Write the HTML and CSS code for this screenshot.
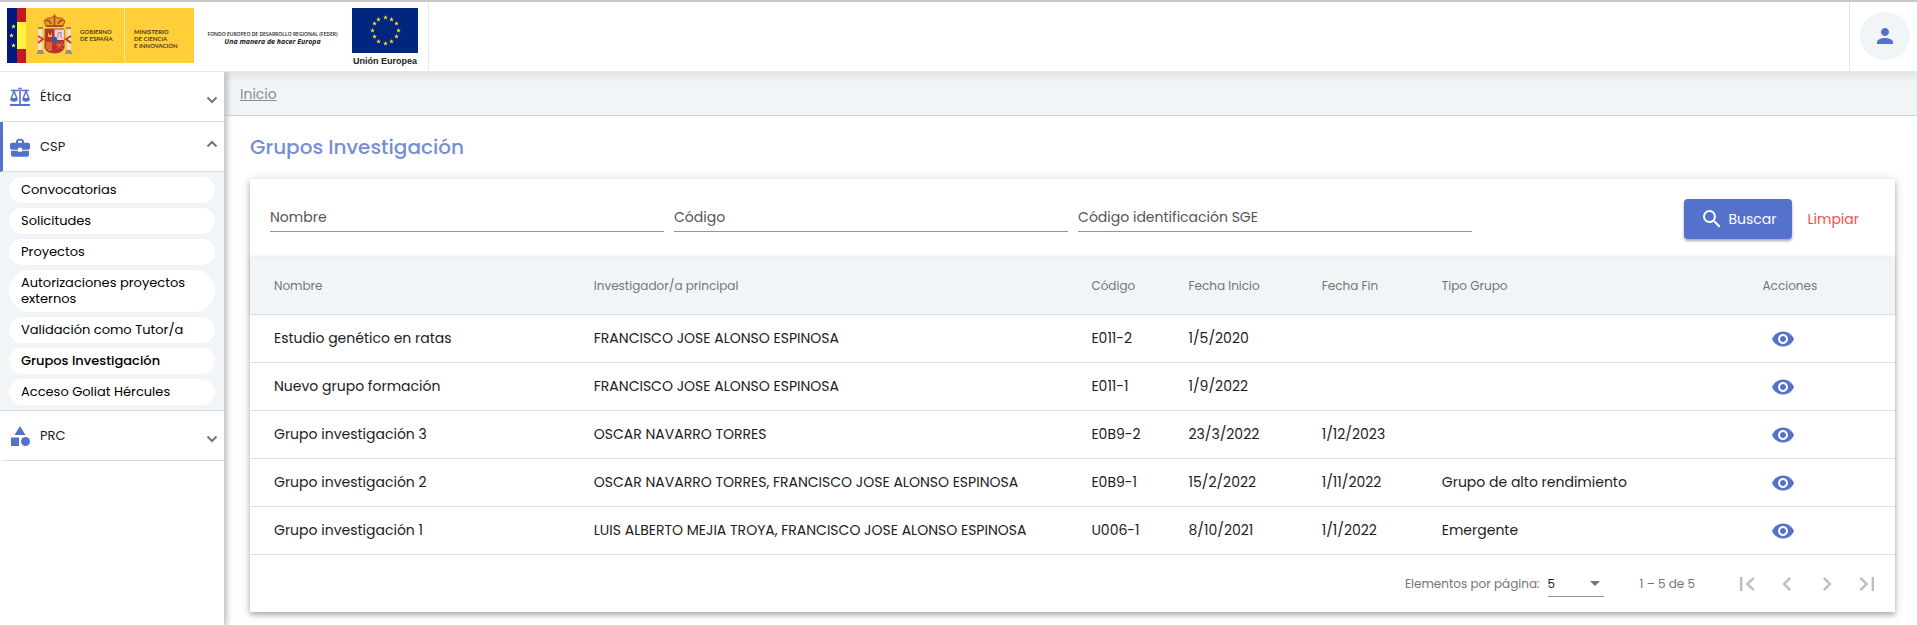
FILE: index.html
```html
<!DOCTYPE html>
<html lang="es">
<head>
<meta charset="utf-8">
<title>Grupos Investigación</title>
<link rel="stylesheet" href="styles.css">
</head>
<body>
<svg class="sprite" aria-hidden="true">
  <symbol id="eye" viewBox="0 0 24 24"><path d="M12 4.5C7 4.5 2.73 7.61 1 12c1.73 4.39 6 7.5 11 7.5s9.27-3.11 11-7.5c-1.73-4.39-6-7.5-11-7.5zM12 17c-2.76 0-5-2.24-5-5s2.24-5 5-5 5 2.24 5 5-2.24 5-5 5zm0-8c-1.66 0-3 1.34-3 3s1.34 3 3 3 3-1.34 3-3-1.34-3-3-3z"/></symbol>
  <symbol id="chevron" viewBox="0 0 12 8"><path d="M1.5 1.5 6 6l4.500-4.500" fill="none" stroke="currentColor" stroke-width="2"/></symbol>
  <symbol id="star" viewBox="-10 -10 20 20"><path d="M0-10 2.500-3.200 9.500-3 4 1.300 6 8 0 4-6 8-4 1.300-9.500-3-2.500-3.200Z"/></symbol>
</svg>
<header class="topbar">
  <div class="logos">
    <svg class="logo-gob" viewBox="0 0 187 55" role="img" aria-label="Gobierno de España, Ministerio de Ciencia e Innovación">
      <rect width="187" height="55" fill="#ffce38"/>
      <rect width="10" height="55" fill="#001a80"/>
      <rect x="10" width="9" height="55" fill="#c41a1f"/>
      <rect x="10" y="14" width="9" height="27" fill="#fff33b"/>
      <g fill="#ffe94a"><use href="#star" x="4" y="16" width="5" height="5"/><use href="#star" x="2" y="25" width="5" height="5"/><use href="#star" x="4" y="35" width="5" height="5"/></g>
      <g>
        <path d="M33 19v25M62 19v25" stroke="#e9e5df" stroke-width="3.500"/>
        <path d="M31 20h5M31 43h5M59 20h5M59 43h5" stroke="#b98542" stroke-width="2"/>
        <path d="M31 28l5 3-5 4M64 28l-5 3 5 4" fill="none" stroke="#cc3b2d" stroke-width="2"/>
        <path d="M30 45h7M58 45h7" stroke="#8996a3" stroke-width="2"/>
        <path d="M39 18l-2-5q3-4 7-3l3.500-2 3.500 2q4-1 7 3l-2 5z" fill="#dca32c" stroke="#b74222"/>
        <path d="M39 13q3-2 5 3M56 13q-3-2-5 3M47.500 8v9M39 18h17" fill="none" stroke="#bf3523" stroke-width="1.500"/>
        <circle cx="47.500" cy="7.500" r="1.300" fill="#b87822"/>
        <path d="M38 21h19v19q-2 5-9.500 5T38 40z" fill="#c62b2c" stroke="#8d5736"/>
        <path d="M47.500 21.500H57V32h-9.500z" fill="#e8d6dd"/>
        <path d="M51 30v-5l3-1v6" fill="none" stroke="#b77a91"/>
        <path d="M41 29v-4h1v2h2v-2h1v4z" fill="#ecbd36"/>
        <path d="M40 34v7m2-7v9m2-9v9" stroke="#e8af30"/>
        <path d="M50 34l5 7m0-7l-5 7m-1-4h8" stroke="#d79831" stroke-width=".700"/>
        <ellipse cx="47.500" cy="32" rx="2.500" ry="3" fill="#48559b" stroke="#35628f"/>
      </g>
      <path d="M117.500 0v55" stroke="#ffe9a5"/>
      <g class="logo-text"><text x="73" y="26">GOBIERNO</text><text x="73" y="33">DE ESPAÑA</text><text x="127" y="26">MINISTERIO</text><text x="127" y="33">DE CIENCIA</text><text x="127" y="40">E INNOVACIÓN</text></g>
    </svg>
    <div class="feder"><span>FONDO EUROPEO DE DESARROLLO REGIONAL (FEDER)</span><em>Una manera de hacer Europa</em></div>
    <div class="union">
      <svg viewBox="0 0 66 45" aria-hidden="true"><rect width="66" height="45" fill="#00267f"/>
        <g fill="#f5dc22"><use href="#star" x="31" y="7" width="5" height="5"/><use href="#star" x="37" y="9" width="5" height="5"/><use href="#star" x="42" y="13" width="5" height="5"/><use href="#star" x="44" y="20" width="5" height="5"/><use href="#star" x="42" y="26" width="5" height="5"/><use href="#star" x="37" y="31" width="5" height="5"/><use href="#star" x="31" y="33" width="5" height="5"/><use href="#star" x="24" y="31" width="5" height="5"/><use href="#star" x="20" y="26" width="5" height="5"/><use href="#star" x="18" y="20" width="5" height="5"/><use href="#star" x="20" y="13" width="5" height="5"/><use href="#star" x="24" y="9" width="5" height="5"/></g>
      </svg>
      <span>Unión Europea</span>
    </div>
  </div>
  <div class="user"><button class="avatar" aria-label="Usuario"><svg viewBox="0 0 24 24"><path d="M12 12c2.210 0 4-1.790 4-4s-1.790-4-4-4-4 1.790-4 4 1.790 4 4 4zm0 2c-2.670 0-8 1.340-8 4v2h16v-2c0-2.660-5.330-4-8-4z"/></svg></button></div>
</header>
<div class="shell">
  <nav class="sidebar">
    <button class="module">
      <svg class="module-icon" viewBox="0 0 20 20"><path d="M0 17h20v2H0zM9.200 4h1.600v13H9.200z"/><circle cx="10" cy="2.500" r="2"/><circle cx="10" cy="2.500" r=".800" fill="#fff"/><path d="M1 3.500h7M12 3.500h7" stroke="currentColor" stroke-width="1.500"/><path d="M4 4 1 12q0 2 3 2t3-2zM16 4l-3 8q0 2 3 2t3-2z" fill="none" stroke="currentColor" stroke-width="1.400"/><path d="M1 11h6v1q0 2-3 2t-3-2zM13 11h6v1q0 2-3 2t-3-2z"/></svg>
      <span>Ética</span><svg class="arrow"><use href="#chevron"/></svg>
    </button>
    <button class="module active" aria-expanded="true">
      <svg class="module-icon" viewBox="0 0 24 24"><path d="M10 16v-1H3.010L3 19c0 1.110.890 2 2 2h14c1.110 0 2-.890 2-2v-4h-7v1h-4zm10-9h-4.010V5l-2-2h-4l-2 2v2H4c-1.100 0-2 .900-2 2v3c0 1.110.890 2 2 2h6v-2h4v2h6c1.100 0 2-.900 2-2V9c0-1.100-.900-2-2-2zm-6 0h-4V5h4v2z" transform="translate(-2.400 -1.600) scale(1.200)"/></svg>
      <span>CSP</span><svg class="arrow up"><use href="#chevron"/></svg>
    </button>
    <ul class="submenu">
      <li><a href="#">Convocatorias</a></li>
      <li><a href="#">Solicitudes</a></li>
      <li><a href="#">Proyectos</a></li>
      <li><a href="#">Autorizaciones proyectos externos</a></li>
      <li><a href="#">Validación como Tutor/a</a></li>
      <li><a href="#" class="current" aria-current="page">Grupos Investigación</a></li>
      <li><a href="#">Acceso Goliat Hércules</a></li>
    </ul>
    <button class="module">
      <svg class="module-icon" viewBox="0 0 20 20"><path d="M10 0l5.500 9h-11zM1 11.500h8V20H1z"/><circle cx="15.500" cy="15.500" r="4.500"/></svg>
      <span>PRC</span><svg class="arrow"><use href="#chevron"/></svg>
    </button>
  </nav>
  <main class="main">
    <div class="breadcrumb"><a href="#">Inicio</a></div>
    <div class="content">
      <h1>Grupos Investigación</h1>
      <section class="card">
        <form class="filters">
          <div class="fields">
            <input type="text" placeholder="Nombre" aria-label="Nombre">
            <input type="text" placeholder="Código" aria-label="Código">
            <input type="text" placeholder="Código identificación SGE" aria-label="Código identificación SGE">
          </div>
          <div class="actions">
            <button type="button" class="search"><svg viewBox="0 0 24 24"><path d="M15.500 14h-.790l-.280-.270A6.471 6.471 0 0 0 16 9.500 6.500 6.500 0 1 0 9.500 16c1.610 0 3.090-.590 4.230-1.570l.270.280v.790l5 4.990L20.490 19l-4.990-5zm-6 0C7.010 14 5 11.990 5 9.500S7.010 5 9.500 5 14 7.010 14 9.500 11.990 14 9.500 14z"/></svg>Buscar</button>
            <button type="reset" class="clear">Limpiar</button>
          </div>
        </form>
        <table>
          <colgroup><col class="c-name"><col class="c-lead"><col class="c-code"><col class="c-start"><col class="c-end"><col class="c-type"><col class="c-act"></colgroup>
          <thead><tr><th>Nombre</th><th>Investigador/a principal</th><th>Código</th><th>Fecha Inicio</th><th>Fecha Fin</th><th>Tipo Grupo</th><th>Acciones</th></tr></thead>
          <tbody>
            <tr><td>Estudio genético en ratas</td><td>FRANCISCO JOSE ALONSO ESPINOSA</td><td>E011-2</td><td>1/5/2020</td><td></td><td></td><td><button class="view" aria-label="Ver"><svg><use href="#eye"/></svg></button></td></tr>
            <tr><td>Nuevo grupo formación</td><td>FRANCISCO JOSE ALONSO ESPINOSA</td><td>E011-1</td><td>1/9/2022</td><td></td><td></td><td><button class="view" aria-label="Ver"><svg><use href="#eye"/></svg></button></td></tr>
            <tr><td>Grupo investigación 3</td><td>OSCAR NAVARRO TORRES</td><td>E0B9-2</td><td>23/3/2022</td><td>1/12/2023</td><td></td><td><button class="view" aria-label="Ver"><svg><use href="#eye"/></svg></button></td></tr>
            <tr><td>Grupo investigación 2</td><td>OSCAR NAVARRO TORRES, FRANCISCO JOSE ALONSO ESPINOSA</td><td>E0B9-1</td><td>15/2/2022</td><td>1/11/2022</td><td>Grupo de alto rendimiento</td><td><button class="view" aria-label="Ver"><svg><use href="#eye"/></svg></button></td></tr>
            <tr><td>Grupo investigación 1</td><td>LUIS ALBERTO MEJIA TROYA, FRANCISCO JOSE ALONSO ESPINOSA</td><td>U006-1</td><td>8/10/2021</td><td>1/1/2022</td><td>Emergente</td><td><button class="view" aria-label="Ver"><svg><use href="#eye"/></svg></button></td></tr>
          </tbody>
        </table>
        <div class="paginator">
          <label for="size">Elementos por página:</label>
          <div class="select"><select id="size"><option>5</option></select></div>
          <span class="range">1 – 5 de 5</span>
          <div class="pages">
            <button disabled aria-label="Primera página"><svg viewBox="0 0 24 24"><path d="M18.410 16.590 13.820 12l4.590-4.590L17 6l-6 6 6 6zM6 6h2v12H6z"/></svg></button>
            <button disabled aria-label="Página anterior"><svg viewBox="0 0 24 24"><path d="M15.410 7.410 14 6l-6 6 6 6 1.410-1.410L10.830 12z"/></svg></button>
            <button disabled aria-label="Página siguiente"><svg viewBox="0 0 24 24"><path d="M10 6 8.590 7.410 13.170 12l-4.580 4.590L10 18l6-6z"/></svg></button>
            <button disabled aria-label="Última página"><svg viewBox="0 0 24 24"><path d="M5.590 7.410 10.180 12l-4.590 4.590L7 18l6-6-6-6zM16 6h2v12h-2z"/></svg></button>
          </div>
        </div>
      </section>
    </div>
  </main>
</div>
</body>
</html>
```
FILE: styles.css
```css
* { box-sizing: border-box; }
body {
  margin: 0;
  min-height: 100vh;
  display: flex;
  flex-direction: column;
  font-family: Poppins, Inter, "Open Sans", sans-serif;
  font-size: 14px;
  color: #212121;
  background: #fff;
}
button, input, select { font: inherit; color: inherit; }
button { border: 0; padding: 0; background: none; }
svg { fill: currentColor; }
.sprite { display: none; }

.topbar {
  display: flex;
  justify-content: space-between;
  height: 72px;
  border-top: 2px solid #c8c8c8;
  border-bottom: 1px solid #e6e8ea;
}
.logos { display: flex; border-right: 1px solid #e6e8ea; padding: 6px 10px 0 7px; }
.logo-gob { width: 187px; height: 55px; }
.logo-text { font: 700 6px Lato, sans-serif; fill: #4d3f16; }
.feder {
  display: flex;
  flex-direction: column;
  align-items: center;
  width: 135px;
  margin: 22px 12px 0 11px;
  white-space: nowrap;
  font: 600 5px/8px "Open Sans", sans-serif;
}
.feder em { font-size: 7px; font-weight: 700; }
.union { display: flex; flex-direction: column; width: 66px; white-space: nowrap; font: bold 9px/16px "Liberation Sans", sans-serif; }
.union svg { width: 66px; height: 45px; }
.union span { align-self: center; }
.user { display: flex; align-items: center; padding: 0 7px 2px 10px; border-left: 1px solid #e6e8ea; }
.avatar { display: grid; place-items: center; width: 50px; height: 48px; border-radius: 50%; background: #f1f5f8; color: #5472cc; }
.avatar svg { width: 24px; height: 24px; }

.shell { display: flex; flex: 1; }
.sidebar { flex: 0 0 225px; border-right: 1px solid #ccc; box-shadow: 2px 0 6px rgba(0,0,0,.25); z-index: 1; clip-path: inset(0 -10px 0 0); }
.module {
  display: flex;
  align-items: center;
  width: 100%;
  height: 50px;
  padding: 0 6px 0 7px;
  border-left: 3px solid transparent;
  border-bottom: 1px solid #d9dbdd;
  font-size: 13px;
}
.module.active { border-left-color: #5472cc; }
.module-icon { width: 20px; height: 20px; margin-right: 10px; color: #5472cc; }
.arrow { width: 12px; height: 8px; margin: 6px 0 0 auto; color: #757575; }
.arrow.up { transform: rotate(180deg); margin: 0 0 6px auto; }
.submenu {
  display: flex;
  flex-direction: column;
  gap: 5px;
  margin: 0;
  padding: 5px 9px;
  list-style: none;
  background: #f1f5f8;
  border-bottom: 1px solid #d9dbdd;
  font-size: 13px;
  line-height: 16px;
}
.submenu a { display: block; padding: 5px 12px; border-radius: 21px; background: #fff; color: #000; text-decoration: none; }
.submenu .current { font-weight: 500; }

.main { flex: 1; min-width: 0; }
.breadcrumb {
  height: 44px;
  padding: 0 15px;
  border-bottom: 1px solid #d0d4d7;
  background: #f1f5f8;
  box-shadow: inset 0 8px 8px -4px rgba(0,0,0,.08);
  line-height: 44px;
}
.breadcrumb a { color: #8b8e91; }
.content { padding: 16px 22px 13px 25px; }
h1 { margin: 0 0 17px; color: #768ed6; font-size: 20px; font-weight: 500; line-height: 30px; }
.card { background: #fff; box-shadow: 0 3px 5px rgba(0,0,0,.25), 0 1px 10px rgba(0,0,0,.15); }
.filters { display: flex; justify-content: space-between; align-items: flex-start; height: 79px; padding: 20px; }
.fields { display: flex; gap: 10px; flex: 0 0 74.9%; }
.fields input { flex: 1; min-width: 0; height: 33px; padding: 4px 0 0; border: 0; border-bottom: 1px solid #949494; background: none; outline: 0; }
.fields input::placeholder { color: #555; opacity: 1; }
.actions { display: flex; gap: 15px; padding-right: 16px; }
.search { display: flex; align-items: center; gap: 4px; height: 40px; padding: 0 16px; border-radius: 4px; background: #5472cc; color: #fff; box-shadow: 0 2px 3px rgba(0,0,0,.35); }
.search svg { width: 24px; height: 24px; }
.clear { color: #f44f4f; }

table { width: 100%; table-layout: fixed; border-collapse: separate; border-spacing: 0; }
.c-name { width: 20.9%; }
.c-lead { width: 30.25%; }
.c-code { width: 5.9%; }
.c-start { width: 8.1%; }
.c-end { width: 7.3%; }
.c-type { width: 19.5%; }
.c-act { width: 8.05%; }
th, td { padding: 0; text-align: left; border-bottom: 1px solid #dedede; white-space: nowrap; }
th:first-child, td:first-child { padding-left: 24px; }
th { height: 57px; background: #f1f5f8; color: #757575; font-size: 12px; font-weight: 400; }
thead { box-shadow: 0 -1px 4px rgba(0,0,0,.12); }
td { height: 48px; }
.view { display: grid; margin-left: 8px; color: #5472cc; }
.view svg { width: 24px; height: 24px; }

.paginator { display: flex; justify-content: flex-end; align-items: center; height: 57px; padding-right: 8px; color: #757575; font-size: 12px; }
.select { position: relative; width: 56px; margin: 0 36px 0 8px; border-bottom: 1px solid #949494; }
.select::after { content: ""; position: absolute; right: 4px; top: 11px; border: 5px solid transparent; border-top-color: #757575; border-bottom: 0; }
.select select { display: block; width: 100%; height: 26px; padding: 0; border: 0; background: none; appearance: none; color: #212121; }
.range { margin-right: 32px; }
.pages { display: flex; }
.pages button { display: grid; place-items: center; width: 40px; height: 40px; color: #bdbdbd; }
.pages svg { width: 28px; height: 28px; }
```
